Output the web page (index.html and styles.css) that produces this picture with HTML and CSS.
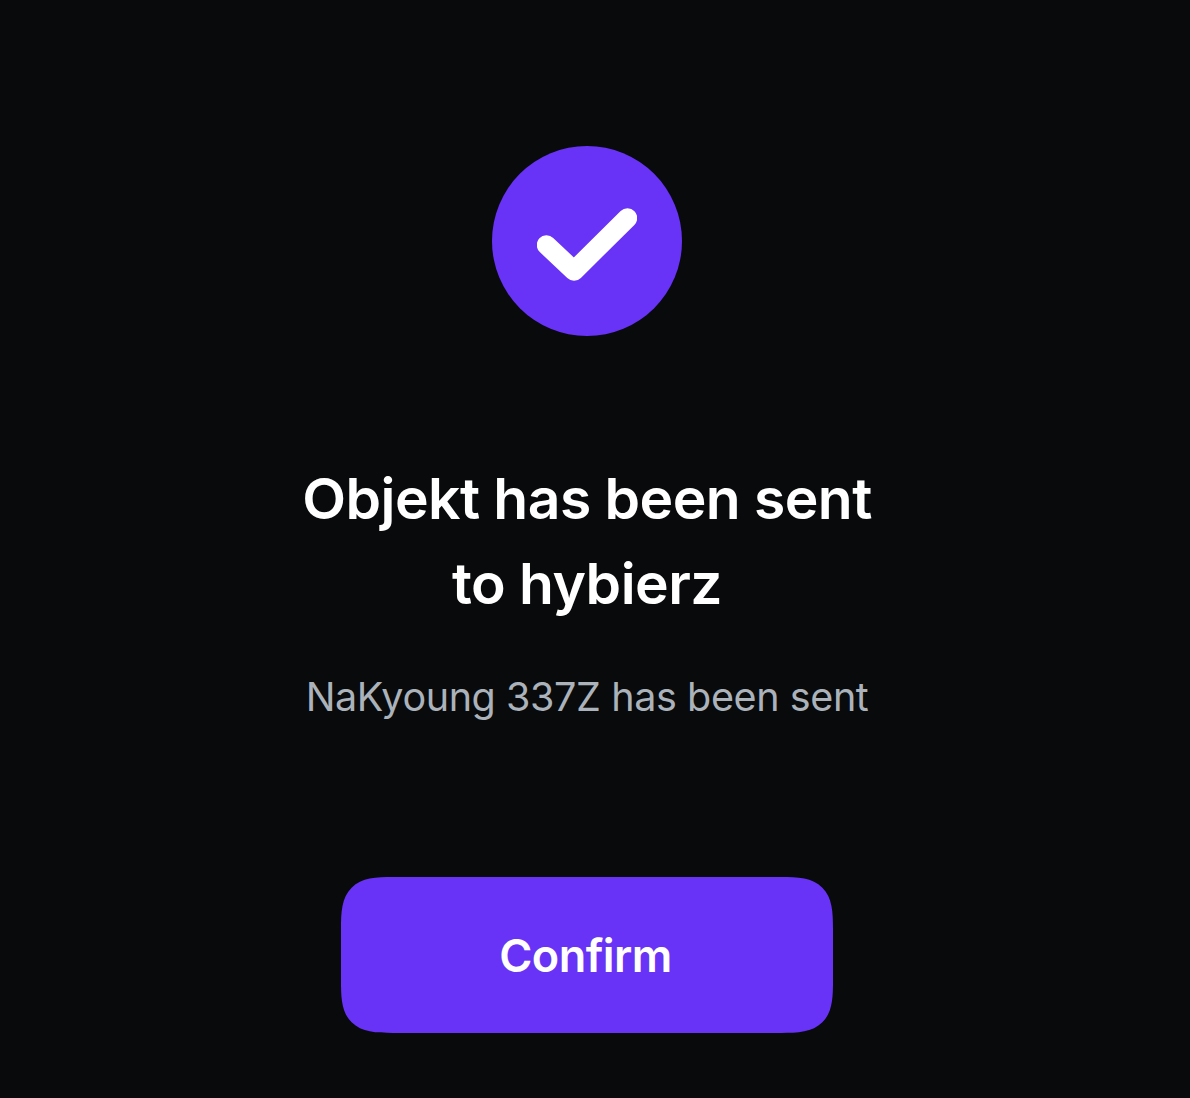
FILE: index.html
```html
<!DOCTYPE html>
<html lang="en">
<head>
<meta charset="utf-8">
<title>Objekt sent</title>
<link rel="stylesheet" href="styles.css">
</head>
<body>
<main class="screen">
  <div class="badge">
    <svg class="check" viewBox="0 0 100 80" width="100" height="80"><path d="M9.5 44 L37 70 L90.5 17" fill="none" stroke="#fff" stroke-width="19.5" stroke-linecap="round" stroke-linejoin="round"/></svg>
  </div>
  <h1 class="title">Objekt has been sent<br>to hybierz</h1>
  <p class="sub">NaKyoung 337Z has been sent</p>
  <button class="confirm">Confirm</button>
</main>
</body>
</html>
```
FILE: styles.css
```css
* { box-sizing: border-box; }
html, body { margin: 0; height: 100%; }
body { background: #080a0c; font-family: Inter, "Liberation Sans", sans-serif; }
.screen { display: flex; flex-direction: column; align-items: center; height: 1098px; padding: 146px 16px 0 0; overflow: hidden; }
.badge { width: 190px; height: 190px; border-radius: 50%; background: #6833f6; display: flex; align-items: center; justify-content: center; }
.title { margin: 120px 0 0; font-size: 57px; line-height: 85px; font-weight: 600; color: #fff; text-align: center; letter-spacing: -0.55px; }
.sub { margin: 43px 0 0; font-size: 39.5px; line-height: 56px; font-weight: 400; color: #abb2ba; letter-spacing: -0.4px; }
.confirm { margin: 152px 0 0; width: 492px; height: 156px; border: 0; border-radius: 52px; corner-shape: superellipse(1.6); background: #6833f6; color: #fff; font: 600 45px/1 Inter, "Liberation Sans", sans-serif; letter-spacing: -0.55px; padding: 0 3px 0 0; }
```
